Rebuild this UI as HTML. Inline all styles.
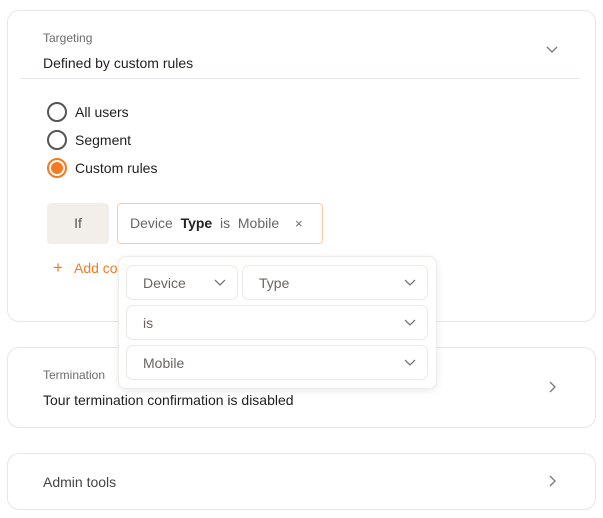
<!DOCTYPE html>
<html><head><style>
*{box-sizing:border-box;margin:0;padding:0}
body{width:603px;height:518px;background:#fff;font-family:"Liberation Sans",sans-serif;position:relative;overflow:hidden;color:#1f1f1f}
.card{position:absolute;left:7px;width:589px;border:1px solid #e8e6e3;border-radius:12px;background:#fff}
.abs{position:absolute}
.lbl{font-size:12px;color:#6b6b6b}
.txt{font-size:14px;color:#1f1f1f}
.radio{position:absolute;left:47px;width:20px;height:20px;border:2px solid #555;border-radius:50%}
.rt{position:absolute;left:75px;font-size:14px}
.sel{position:absolute;border:1px solid #ebe9e6;border-radius:7px;height:35px;font-size:14px;color:#6b6461;padding:9px 0 0 16px}
.sel svg{position:absolute;right:10px;top:12px}
</style></head><body>
<div class="card" style="top:10px;height:312px"></div>
<div class="abs lbl" style="left:43px;top:31px">Targeting</div>
<div class="abs txt" style="left:43px;top:55px">Defined by custom rules</div>
<svg class="abs" style="left:545px;top:45px" width="14" height="10"><path d="M2 2l5 5 5-5" fill="none" stroke="#777" stroke-width="1.3"/></svg>
<div class="abs" style="left:20px;top:78px;width:560px;height:1px;background:#e3e6ea"></div>
<div class="radio" style="top:102px"></div><div class="rt" style="top:104px">All users</div>
<div class="radio" style="top:130px"></div><div class="rt" style="top:132px">Segment</div>
<div class="radio" style="top:158px;border-color:#f57a20"><div style="position:absolute;left:2px;top:2px;width:12px;height:12px;border-radius:50%;background:#f57a20"></div></div><div class="rt" style="top:160px">Custom rules</div>
<div class="abs" style="left:47px;top:203px;width:62px;height:41px;background:#f2efea;border-radius:4px;font-size:14px;color:#555;text-align:center;line-height:41px">If</div>
<div class="abs" style="left:117px;top:203px;width:206px;height:41px;border:1px solid #fbcb9f;border-radius:4px;font-size:14px;color:#666;line-height:39px;padding-left:12px">Device&nbsp; <b style="color:#222">Type</b>&nbsp; is&nbsp; Mobile <span style="margin-left:12px;font-size:13px">×</span></div>
<div class="abs" style="left:53px;top:258px;font-size:17px;color:#f57a20">+</div>
<div class="abs" style="left:74px;top:260px;font-size:14px;color:#f57a20">Add co</div>
<div class="card" style="top:347px;height:81px"></div>
<div class="abs lbl" style="left:43px;top:368px">Termination</div>
<div class="abs txt" style="left:43px;top:392px">Tour termination confirmation is disabled</div>
<svg class="abs" style="left:547px;top:380px" width="10" height="14"><path d="M3 2l5 5-5 5" fill="none" stroke="#777" stroke-width="1.3"/></svg>
<div class="card" style="top:453px;height:57px"></div>
<div class="abs txt" style="left:43px;top:474px;color:#444">Admin tools</div>
<svg class="abs" style="left:547px;top:474px" width="10" height="14"><path d="M3 2l5 5-5 5" fill="none" stroke="#777" stroke-width="1.3"/></svg>
<div class="abs" style="left:118px;top:256px;width:319px;height:133px;background:#fff;border:1px solid #eeece9;border-radius:8px;box-shadow:0 2px 8px rgba(0,0,0,.08)"></div>
<div class="sel" style="left:126px;top:265px;width:112px">Device<svg width="14" height="10"><path d="M2 2l5 5 5-5" fill="none" stroke="#777" stroke-width="1.3"/></svg></div>
<div class="sel" style="left:242px;top:265px;width:186px">Type<svg width="14" height="10"><path d="M2 2l5 5 5-5" fill="none" stroke="#777" stroke-width="1.3"/></svg></div>
<div class="sel" style="left:126px;top:305px;width:302px">is<svg width="14" height="10"><path d="M2 2l5 5 5-5" fill="none" stroke="#777" stroke-width="1.3"/></svg></div>
<div class="sel" style="left:126px;top:345px;width:302px">Mobile<svg width="14" height="10"><path d="M2 2l5 5 5-5" fill="none" stroke="#777" stroke-width="1.3"/></svg></div>
</body></html>
